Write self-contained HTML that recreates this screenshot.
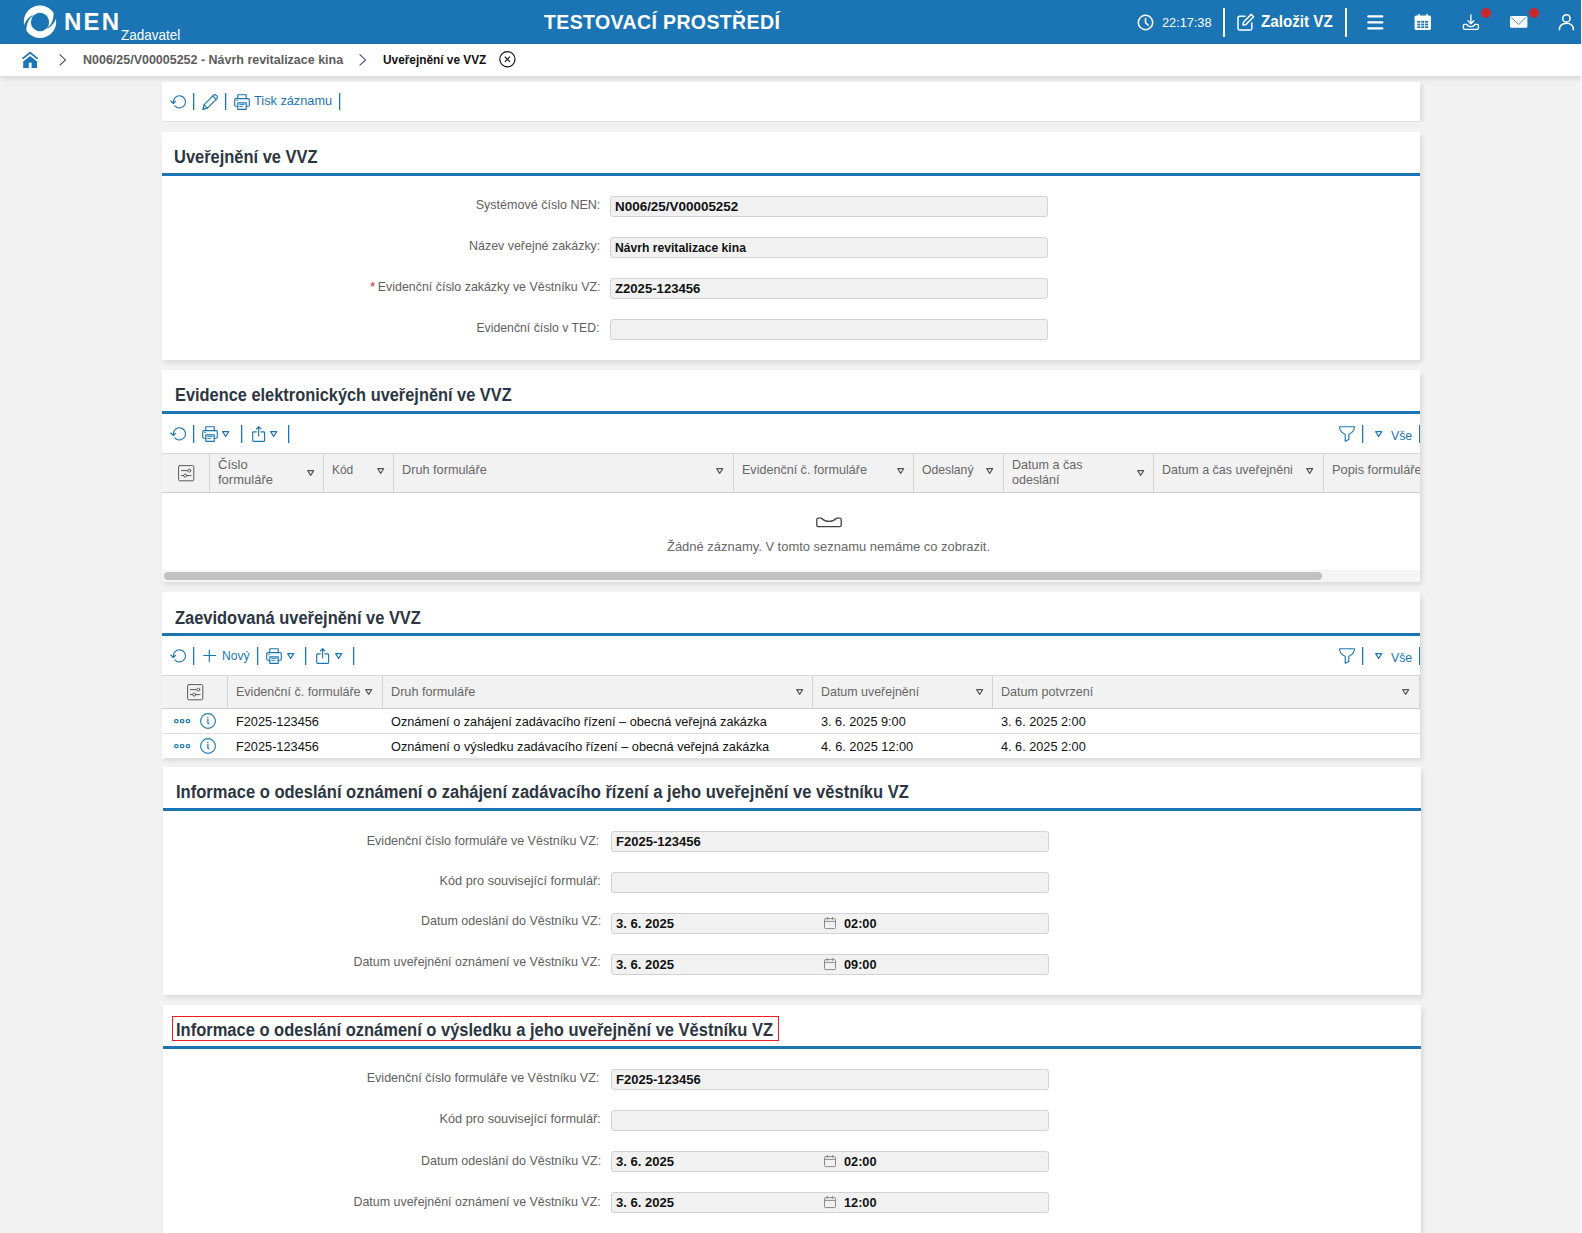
<!DOCTYPE html>
<html lang="cs">
<head>
<meta charset="utf-8">
<title>NEN - Uveřejnění ve VVZ</title>
<style>
*{box-sizing:border-box;margin:0;padding:0}
html,body{width:1582px;height:1233px;overflow:hidden;background:#fff}
body{font-family:"Liberation Sans",sans-serif;font-size:13px;color:#666;position:relative}
#app{position:absolute;left:0;top:0;width:1581px;height:1233px;background:#f2f2f2;overflow:hidden}
.abs{position:absolute}
svg{display:block;overflow:visible}
/* header */
#hdr{position:absolute;left:0;top:0;width:1581px;height:44px;background:#1b75b4;color:#fff}
#bc{position:absolute;left:0;top:44px;width:1581px;height:32px;background:#fff;box-shadow:0 2px 6px rgba(0,0,0,.14)}
.t{position:absolute;white-space:nowrap;line-height:1;transform-origin:0 0}
.r{transform-origin:100% 0}
/* panels */
.panel{position:absolute;background:#fff;box-shadow:2px 2.5px 5px rgba(0,0,0,.11)}
.ttl{position:absolute;left:12px;font-weight:bold;font-size:18px;color:#2c3642;white-space:nowrap;line-height:1;transform-origin:0 0}
.bline{position:absolute;left:0;right:0;height:3px;background:#1b75b4}
.lbl{position:absolute;white-space:nowrap;line-height:1;font-size:13px;color:#606060;transform-origin:100% 0}
.inp{position:absolute;left:448px;width:438px;height:21px;background:#f1f1f1;border:1px solid #d2d2d2;border-radius:3px}
.val{position:absolute;left:4.4px;top:3px;white-space:nowrap;line-height:1;font-size:13px;font-weight:bold;color:#111;transform-origin:0 0}
.sep{position:absolute;width:2px;background:linear-gradient(to right,#1b75b4 0,#1b75b4 1px,rgba(27,117,180,.28) 1px)}
.blue{color:#1b75b4}
.th{position:absolute;background:#f2f2f2;border-top:1px solid #d6d6d6;border-bottom:1px solid #cfcfcf}
.cs{position:absolute;width:1px;background:#d4d4d4}
.ht{position:absolute;white-space:nowrap;line-height:14.6px;font-size:13px;color:#666;transform-origin:0 0}
.ct{position:absolute;white-space:nowrap;line-height:1;font-size:13px;color:#111;transform-origin:0 0}
</style>
</head>
<body>
<div id="app">

<div id="hdr">
  <svg class="abs" style="left:0;top:0" width="80" height="44" viewBox="0 0 80 44">
    <circle cx="40" cy="21.8" r="16.2" fill="#fff"/>
    <circle cx="40" cy="22" r="9.2" fill="#1b75b4"/>
    <g id="sw" fill="#1b75b4">
      <path d="M23.4 27.4 C24.6 22.3 27.6 17.8 32.3 15.3 L32.8 16 C29.1 18.6 26.5 22.8 26.3 31.4 Z"/>
      <path d="M23.4 27.4 C24.6 22.3 27.6 17.8 32.3 15.3 L32.8 16 C29.1 18.6 26.5 22.8 26.3 31.4 Z" transform="rotate(180 40 21.9)"/>
    </g>
  </svg>
  <div class="t" style="left:64px;top:10px;font-size:24px;font-weight:bold;letter-spacing:2.2px">NEN</div>
  <div class="t" style="left:120.5px;top:27.5px;font-size:14px;transform:scaleX(0.9628)">Zadavatel</div>
  <div class="t" style="left:544px;top:13px;font-size:19.5px;font-weight:bold;letter-spacing:0.38px">TESTOVACÍ PROSTŘEDÍ</div>
  <!-- clock -->
  <svg class="abs" style="left:1137px;top:14px" width="17" height="17" viewBox="0 0 17 17" fill="none" stroke="#fff" stroke-width="1.5" stroke-linecap="round" stroke-linejoin="round">
    <circle cx="8.5" cy="8.5" r="7.2"/><path d="M8.5 4.4V8.6L11.3 11.2"/>
  </svg>
  <div class="t" style="left:1161.5px;top:16px;font-size:13px;transform:scaleX(0.9781)">22:17:38</div>
  <div class="abs" style="left:1223px;top:8px;width:2px;height:29px;background:#fff"></div>
  <!-- edit -->
  <svg class="abs" style="left:1237px;top:13px" width="18" height="18" viewBox="0 0 18 18" fill="none" stroke="#fff" stroke-width="1.5" stroke-linecap="round" stroke-linejoin="round">
    <path d="M8 3.2H2.6Q1 3.2 1 4.8V15.4Q1 17 2.6 17H13.2Q14.8 17 14.8 15.4V10"/>
    <path d="M14.2 1.4L16.6 3.8L9 11.4L6 12L6.6 9Z"/>
  </svg>
  <div class="t" style="left:1261px;top:13.5px;font-size:16px;font-weight:bold;transform:scaleX(0.9489)">Založit VZ</div>
  <div class="abs" style="left:1345px;top:8px;width:2px;height:29px;background:#fff"></div>
  <!-- hamburger -->
  <svg class="abs" style="left:1367px;top:14px" width="17" height="17" viewBox="0 0 17 17" fill="#fff">
    <rect x="0.2" y="1.2" width="16.2" height="2.3" rx="1"/><rect x="0.2" y="7.2" width="16.2" height="2.3" rx="1"/><rect x="0.2" y="13.2" width="16.2" height="2.3" rx="1"/>
  </svg>
  <!-- calendar -->
  <svg class="abs" style="left:1414px;top:13px" width="18" height="18" viewBox="0 0 18 18">
    <rect x="0.6" y="2.6" width="16.4" height="14.4" rx="1.6" fill="#fff"/>
    <rect x="4" y="0.8" width="1.6" height="3.6" rx=".8" fill="#fff"/><rect x="12" y="0.8" width="1.6" height="3.6" rx=".8" fill="#fff"/>
    <g fill="#1b75b4"><rect x="3.3" y="7.9" width="3" height="1.8"/><rect x="7.2" y="7.9" width="3" height="1.8"/><rect x="11.1" y="7.9" width="3" height="1.8"/><rect x="3.3" y="10.6" width="3" height="1.8"/><rect x="7.2" y="10.6" width="3" height="1.8"/><rect x="11.1" y="10.6" width="3" height="1.8"/><rect x="3.3" y="13.3" width="3" height="1.8"/><rect x="7.2" y="13.3" width="3" height="1.8"/><rect x="11.1" y="13.3" width="3" height="1.8"/></g>
  </svg>
  <!-- download -->
  <svg class="abs" style="left:1462px;top:13px" width="18" height="18" viewBox="0 0 18 18" fill="none" stroke="#fff" stroke-width="1.35" stroke-linecap="round" stroke-linejoin="round">
    <path d="M8.9 1.8V10.6M6 7.8L8.9 10.8L11.8 7.8"/>
    <path d="M5 11.4H2.6Q1.4 11.4 1.4 12.6V15Q1.4 16.4 2.8 16.4H15Q16.4 16.4 16.4 15V12.6Q16.4 11.4 15.2 11.4H12.8Q12.4 13.6 8.9 13.6Q5.4 13.6 5 11.4Z"/>
  </svg>
  <div class="abs" style="left:1481px;top:8px;width:10px;height:10px;border-radius:5px;background:#c9272d"></div>
  <!-- mail -->
  <svg class="abs" style="left:1510px;top:16px" width="18" height="12" viewBox="0 0 18 12">
    <rect x="0" y="0" width="17.4" height="11.8" rx="1.4" fill="#fff"/>
    <path d="M1.2 1.2L8.7 8.6L16.2 1.2" fill="none" stroke="#1b75b4" stroke-width="0.8"/>
  </svg>
  <div class="abs" style="left:1529px;top:8px;width:10px;height:10px;border-radius:5px;background:#c9272d"></div>
  <!-- user -->
  <svg class="abs" style="left:1558px;top:13px" width="17" height="18" viewBox="0 0 17 18" fill="none" stroke="#fff" stroke-width="1.5" stroke-linecap="round">
    <circle cx="8.4" cy="5.4" r="3.7"/><path d="M1.4 16.8C1.4 12.6 4.4 10.2 8.4 10.2C12.4 10.2 15.4 12.6 15.4 16.8"/>
  </svg>
</div>

<div id="bc">
  <svg class="abs" style="left:22px;top:7px" width="17" height="18" viewBox="0 0 17 18">
    <path d="M1 7.3L8.1 1.5L15.2 7.3" fill="none" stroke="#1b75b4" stroke-width="1.7" stroke-linecap="round" stroke-linejoin="miter"/>
    <path d="M8.1 5L1.2 10.5V16.4Q1.2 17 1.8 17H6.8V11.7H9.6V17H14.4Q15 17 15 16.4V10.5Z" fill="#1b75b4"/>
  </svg>
  <svg class="abs" style="left:59px;top:10px" width="8" height="12" viewBox="0 0 8 12" fill="none" stroke="#3d4a66" stroke-width="1.05"><path d="M0.6 0.4L6.5 5.9L0.6 11.4"/></svg>
  <div class="t" style="left:82.5px;top:10px;font-size:12px;font-weight:bold;color:#5c5c5c;transform:scaleX(1.0397)">N006/25/V00005252 - Návrh revitalizace kina</div>
  <svg class="abs" style="left:359.2px;top:10.2px" width="8" height="12" viewBox="0 0 8 12" fill="none" stroke="#3d4a66" stroke-width="1.05"><path d="M0.6 0.4L6.5 5.9L0.6 11.4"/></svg>
  <div class="t" style="left:383px;top:10px;font-size:12px;font-weight:bold;color:#111;transform:scaleX(0.9865)">Uveřejnění ve VVZ</div>
  <svg class="abs" style="left:499px;top:7.2px" width="17" height="17" viewBox="0 0 17 17" fill="none" stroke="#111" stroke-width="1.2"><circle cx="8.4" cy="8.3" r="7.6"/><path d="M5.8 5.7L11 10.9M11 5.7L5.8 10.9" stroke-width="1.1"/></svg>
</div>

<svg width="0" height="0" style="position:absolute">
  <defs>
    <g id="i-refresh" fill="none" stroke="#1b75b4" stroke-width="1.15" stroke-linecap="round" stroke-linejoin="round">
      <path d="M4.83 11.82A6.1 6.1 0 1 0 3.5 9.1"/><path d="M0.8 7L3.4 9.5L5.5 7.3"/>
    </g>
    <g id="i-print" fill="none" stroke="#1b75b4" stroke-width="1.15" stroke-linejoin="round" stroke-linecap="round">
      <path d="M3.8 4.6V0.7H12.2V4.6"/>
      <path d="M3.8 12.2H1.8Q0.7 12.2 0.7 11.1V5.7Q0.7 4.6 1.8 4.6H14.2Q15.3 4.6 15.3 5.7V11.1Q15.3 12.2 14.2 12.2H12.2"/>
      <path d="M3.8 8.8H12.2V15.3H3.8Z"/>
      <path d="M5.7 10.6H10.3M5.7 12.6H8.6M2.6 6.5H3.3" stroke-width="0.9"/>
    </g>
    <g id="i-pencil" fill="none" stroke="#1b75b4" stroke-width="1.15" stroke-linejoin="round" stroke-linecap="round">
      <path d="M0.8 15.4L2 10.8L11.6 1.2Q12.8 0.2 14 1.2L15 2.2Q16 3.4 15 4.6L5.4 14.2Z"/>
      <path d="M2 10.8L5.4 14.2M10.9 2L14.2 5.3"/>
      <path d="M0.8 15.4L1.5 12.8L3.4 14.7Z" fill="#1b75b4" stroke="none"/>
    </g>
    <g id="i-export" fill="none" stroke="#1b75b4" stroke-width="1.15" stroke-linejoin="round" stroke-linecap="round">
      <path d="M4.4 5.8H1.6Q0.7 5.8 0.7 6.7V14.4Q0.7 15.3 1.6 15.3H11.7Q12.6 15.3 12.6 14.4V6.7Q12.6 5.8 11.7 5.8H8.9"/>
      <path d="M6.65 10V0.8M4.4 3L6.65 0.7L8.9 3"/>
    </g>
    <g id="i-tri" fill="none" stroke="#1b75b4" stroke-width="1.2" stroke-linejoin="round">
      <path d="M0.65 0.65H6.7L3.68 5.5Z"/>
    </g>
    <g id="i-trig" fill="none" stroke="#555" stroke-width="1.1" stroke-linejoin="round">
      <path d="M0.65 0.65H6.7L3.68 5.35Z"/>
    </g>
    <g id="i-funnel" fill="none" stroke="#1b75b4" stroke-width="1.15" stroke-linejoin="round" stroke-linecap="round">
      <path d="M1.2 0.7H14.8Q15.6 0.7 15.5 1.5Q14.6 6.4 9.8 8.2V13.4L6.2 15.3V8.2Q1.4 6.4 0.5 1.5Q0.4 0.7 1.2 0.7Z"/>
    </g>
    <g id="i-plus" fill="none" stroke="#1b75b4" stroke-width="1.15" stroke-linecap="round">
      <path d="M5.3 0V11.6M-0.3 5.5H11.6"/>
    </g>
    <g id="i-sett" fill="none" stroke="#5a5a5a" stroke-width="1" stroke-linecap="round">
      <rect x="0.6" y="0.6" width="15.2" height="15.2" rx="1.2"/>
      <path d="M3.4 5.6H9.6M3.4 10.6H5.6M8.8 10.6H13"/>
      <circle cx="11.3" cy="5.6" r="1.5"/><circle cx="7.2" cy="10.6" r="1.5"/>
    </g>
    <g id="i-dots" fill="none" stroke="#1b75b4" stroke-width="1.2">
      <rect x="0.6" y="0.6" width="3.5" height="3.1" rx="1.5"/><rect x="6.4" y="0.6" width="3.5" height="3.1" rx="1.5"/><rect x="12.2" y="0.6" width="3.5" height="3.1" rx="1.5"/>
    </g>
    <g id="i-info" fill="none" stroke="#1b75b4" stroke-width="1.1" stroke-linecap="round">
      <circle cx="8" cy="8" r="7.4"/>
      <path d="M7.9 6.2V10.2L8.9 10.8" stroke-width="1.2"/><circle cx="7.8" cy="4.4" r="0.7" fill="#1b75b4" stroke="none"/>
    </g>
    <g id="i-cal" fill="none" stroke="#8a8a8a" stroke-width="1" stroke-linecap="round">
      <rect x="0.5" y="1.6" width="11" height="10" rx="1"/><path d="M0.6 4.4H11.4M3.4 0.4V2.4M8.6 0.4V2.4"/>
    </g>
  </defs>
</svg>
<div class="panel" style="left:162px;top:82px;width:1258px;height:39px;clip-path:inset(-2px -10px -1px -2px)">
  <svg class="abs" style="left:8px;top:12px" width="17" height="16"><use href="#i-refresh"/></svg>
  <div class="sep" style="left:31px;top:11px;height:17px"></div>
  <svg class="abs" style="left:40px;top:11.5px" width="17" height="17"><use href="#i-pencil"/></svg>
  <div class="sep" style="left:63px;top:11px;height:17px"></div>
  <svg class="abs" style="left:72px;top:12px" width="17" height="17"><use href="#i-print"/></svg>
  <div class="t blue" style="left:92px;top:12px;font-size:13px;transform:scaleX(0.9797)">Tisk záznamu</div>
  <div class="sep" style="left:177px;top:11px;height:17px"></div>
</div>

<div class="panel" style="left:162px;top:132px;width:1258px;height:228px">
  <div class="ttl" style="top:16px;left:12.2px;transform:scaleX(0.9142)">Uveřejnění ve VVZ</div>
  <div class="bline" style="top:41px"></div>
  <div class="lbl" style="right:820px;top:66px;transform:scaleX(0.9634)">Systémové číslo NEN:</div>
  <div class="inp" style="top:64px"><div class="val" style="transform:scaleX(1.0337)">N006/25/V00005252</div></div>
  <div class="lbl" style="right:820px;top:107px;transform:scaleX(0.9557)">Název veřejné zakázky:</div>
  <div class="inp" style="top:105px"><div class="val" style="transform:scaleX(0.9336)">Návrh revitalizace kina</div></div>
  <div class="lbl" style="right:820px;top:148px;transform:scaleX(0.9538)"><span style="color:#c9272d;margin-right:3px">*</span>Evidenční číslo zakázky ve Věstníku VZ:</div>
  <div class="inp" style="top:146px"><div class="val" style="transform:scaleX(1.0097)">Z2025-123456</div></div>
  <div class="lbl" style="right:820px;top:189px;transform:scaleX(0.9430)">Evidenční číslo v TED:</div>
  <div class="inp" style="top:187px"></div>
</div>

<div class="panel" style="left:162px;top:370px;width:1258px;height:212px;overflow:hidden">
  <div class="ttl" style="top:16px;left:12.6px;transform:scaleX(0.9096)">Evidence elektronických uveřejnění ve VVZ</div>
  <div class="bline" style="top:41px"></div>
  <svg class="abs" style="left:8px;top:56px" width="17" height="16"><use href="#i-refresh"/></svg>
  <div class="sep" style="left:31px;top:55px;height:18px"></div>
  <svg class="abs" style="left:40px;top:56px" width="17" height="17"><use href="#i-print"/></svg>
  <svg class="abs" style="left:60.3px;top:60.5px" width="8" height="7"><use href="#i-tri"/></svg>
  <div class="sep" style="left:79px;top:55px;height:18px"></div>
  <svg class="abs" style="left:89.6px;top:56px" width="14" height="17"><use href="#i-export"/></svg>
  <svg class="abs" style="left:108px;top:60.5px" width="8" height="7"><use href="#i-tri"/></svg>
  <div class="sep" style="left:126px;top:55px;height:18px"></div>
  <svg class="abs" style="left:1177px;top:56px" width="17" height="17"><use href="#i-funnel"/></svg>
  <div class="sep" style="left:1200px;top:55px;height:18px"></div>
  <svg class="abs" style="left:1213.3px;top:60.5px" width="8" height="7"><use href="#i-tri"/></svg>
  <div class="t blue" style="left:1228.5px;top:59px;font-size:13px;transform:scaleX(0.9462)">Vše</div>
  <div class="sep" style="left:1256.8px;top:55px;height:18px"></div>
  <!-- header -->
  <div class="th" style="left:0;top:83px;width:1258px;height:40px"></div>
  <svg class="abs" style="left:16px;top:95px" width="17" height="17"><use href="#i-sett"/></svg>
  <div class="cs" style="left:47px;top:84px;height:38px"></div>
  <div class="ht" style="left:56px;top:88px;transform:scaleX(1.0014)">Číslo<br>formuláře</div>
  <svg class="abs" style="left:145px;top:100px" width="8" height="7"><use href="#i-trig"/></svg>
  <div class="cs" style="left:161px;top:84px;height:38px"></div>
  <div class="ht" style="left:170px;top:92.5px;transform:scaleX(0.9161)">Kód</div>
  <svg class="abs" style="left:214.5px;top:97.5px" width="8" height="7"><use href="#i-trig"/></svg>
  <div class="cs" style="left:231px;top:84px;height:38px"></div>
  <div class="ht" style="left:240px;top:92.5px;transform:scaleX(0.9769)">Druh formuláře</div>
  <svg class="abs" style="left:554.3px;top:97.5px" width="8" height="7"><use href="#i-trig"/></svg>
  <div class="cs" style="left:571px;top:84px;height:38px"></div>
  <div class="ht" style="left:580px;top:92.5px;transform:scaleX(0.9656)">Evidenční č. formuláře</div>
  <svg class="abs" style="left:734.5px;top:97.5px" width="8" height="7"><use href="#i-trig"/></svg>
  <div class="cs" style="left:751px;top:84px;height:38px"></div>
  <div class="ht" style="left:760px;top:92.5px;transform:scaleX(0.9377)">Odeslaný</div>
  <svg class="abs" style="left:824.4px;top:97.5px" width="8" height="7"><use href="#i-trig"/></svg>
  <div class="cs" style="left:841px;top:84px;height:38px"></div>
  <div class="ht" style="left:850px;top:88px;transform:scaleX(0.9660)">Datum a čas<br>odeslání</div>
  <svg class="abs" style="left:975px;top:100px" width="8" height="7"><use href="#i-trig"/></svg>
  <div class="cs" style="left:991px;top:84px;height:38px"></div>
  <div class="ht" style="left:1000px;top:92.5px;transform:scaleX(0.9584)">Datum a čas uveřejněni</div>
  <svg class="abs" style="left:1144.4px;top:97.5px" width="8" height="7"><use href="#i-trig"/></svg>
  <div class="cs" style="left:1161px;top:84px;height:38px"></div>
  <div class="ht" style="left:1170px;top:92.5px;transform:scaleX(0.9852)">Popis formuláře</div>
  <!-- empty -->
  <svg class="abs" style="left:654px;top:147px" width="26" height="11" viewBox="0 0 26 11" fill="none" stroke="#444" stroke-width="1.3" stroke-linejoin="round"><path d="M2.2 1.2H5.4Q8.6 4.4 13 4.4Q17.4 4.400 20.600 1.2H23.8Q25.2 1.2 25.2 2.600V8.200Q25.2 9.600 23.8 9.600H2.2Q0.8 9.600 0.8 8.200V2.600Q0.8 1.2 2.2 1.2Z"/></svg>
  <div class="t" style="left:505px;top:170px;font-size:13px;color:#666;transform:scaleX(0.9963)">Žádné záznamy. V tomto seznamu nemáme co zobrazit.</div>
  <!-- scrollbar -->
  <div class="abs" style="left:0;top:200px;width:1258px;height:12px;background:#f5f5f5"></div>
  <div class="abs" style="left:2px;top:202px;width:1158px;height:8px;border-radius:4px;background:#c1c1c1"></div>
</div>

<div class="panel" style="left:162px;top:592px;width:1258px;height:166px;overflow:hidden">
  <div class="ttl" style="top:16.5px;left:12.6px;transform:scaleX(0.9137)">Zaevidovaná uveřejnění ve VVZ</div>
  <div class="bline" style="top:41px"></div>
  <svg class="abs" style="left:8px;top:56px" width="17" height="16"><use href="#i-refresh"/></svg>
  <div class="sep" style="left:31px;top:55px;height:18px"></div>
  <svg class="abs" style="left:42.2px;top:58px" width="12" height="12"><use href="#i-plus"/></svg>
  <div class="t blue" style="left:60.3px;top:57.2px;font-size:13px;transform:scaleX(0.9283)">Nový</div>
  <div class="sep" style="left:95px;top:55px;height:18px"></div>
  <svg class="abs" style="left:104.3px;top:56px" width="17" height="17"><use href="#i-print"/></svg>
  <svg class="abs" style="left:125px;top:60.5px" width="8" height="7"><use href="#i-tri"/></svg>
  <div class="sep" style="left:143px;top:55px;height:18px"></div>
  <svg class="abs" style="left:154px;top:56px" width="14" height="17"><use href="#i-export"/></svg>
  <svg class="abs" style="left:173px;top:60.5px" width="8" height="7"><use href="#i-tri"/></svg>
  <div class="sep" style="left:191px;top:55px;height:18px"></div>
  <svg class="abs" style="left:1177px;top:56px" width="17" height="17"><use href="#i-funnel"/></svg>
  <div class="sep" style="left:1200px;top:55px;height:18px"></div>
  <svg class="abs" style="left:1213.3px;top:60.5px" width="8" height="7"><use href="#i-tri"/></svg>
  <div class="t blue" style="left:1228.5px;top:59px;font-size:13px;transform:scaleX(0.9462)">Vše</div>
  <div class="sep" style="left:1256.8px;top:55px;height:18px"></div>
  <!-- header -->
  <div class="th" style="left:0;top:83px;width:1258px;height:34px"></div>
  <svg class="abs" style="left:25px;top:92px" width="17" height="17"><use href="#i-sett"/></svg>
  <div class="cs" style="left:65px;top:84px;height:32px"></div>
  <div class="ht" style="left:74px;top:93px;transform:scaleX(0.9633)">Evidenční č. formuláře</div>
  <svg class="abs" style="left:203.3px;top:97px" width="8" height="7"><use href="#i-trig"/></svg>
  <div class="cs" style="left:220px;top:84px;height:32px"></div>
  <div class="ht" style="left:229px;top:93px;transform:scaleX(0.9734)">Druh formuláře</div>
  <svg class="abs" style="left:633.5px;top:97px" width="8" height="7"><use href="#i-trig"/></svg>
  <div class="cs" style="left:650px;top:84px;height:32px"></div>
  <div class="ht" style="left:659px;top:93px;transform:scaleX(0.9559)">Datum uveřejnění</div>
  <svg class="abs" style="left:813.8px;top:97px" width="8" height="7"><use href="#i-trig"/></svg>
  <div class="cs" style="left:830px;top:84px;height:32px"></div>
  <div class="ht" style="left:839px;top:93px;transform:scaleX(0.9667)">Datum potvrzení</div>
  <svg class="abs" style="left:1240.2px;top:97px" width="8" height="7"><use href="#i-trig"/></svg>
  <div class="cs" style="left:1257px;top:84px;height:32px"></div>
  <!-- rows -->
  <div class="abs" style="left:0;top:141px;width:1258px;height:1px;background:#dcdcdc"></div>
  <svg class="abs" style="left:11.6px;top:126.7px" width="17" height="5"><use href="#i-dots"/></svg>
  <svg class="abs" style="left:38px;top:121px" width="16" height="16"><use href="#i-info"/></svg>
  <div class="ct" style="left:74px;top:122.5px;transform:scaleX(0.9802)">F2025-123456</div>
  <div class="ct" style="left:229px;top:122.5px;transform:scaleX(0.9772)">Oznámení o zahájení zadávacího řízení – obecná veřejná zakázka</div>
  <div class="ct" style="left:659px;top:122.5px;transform:scaleX(0.9764)">3. 6. 2025 9:00</div>
  <div class="ct" style="left:839px;top:122.5px;transform:scaleX(0.9764)">3. 6. 2025 2:00</div>
  <svg class="abs" style="left:11.6px;top:151.5px" width="17" height="5"><use href="#i-dots"/></svg>
  <svg class="abs" style="left:38px;top:146px" width="16" height="16"><use href="#i-info"/></svg>
  <div class="ct" style="left:74px;top:147.5px;transform:scaleX(0.9802)">F2025-123456</div>
  <div class="ct" style="left:229px;top:147.5px;transform:scaleX(0.9801)">Oznámení o výsledku zadávacího řízení – obecná veřejná zakázka</div>
  <div class="ct" style="left:659px;top:147.5px;transform:scaleX(0.9810)">4. 6. 2025 12:00</div>
  <div class="ct" style="left:839px;top:147.5px;transform:scaleX(0.9764)">4. 6. 2025 2:00</div>
</div>

<div class="panel" style="left:163px;top:767px;width:1258px;height:228px">
  <div class="ttl" style="top:16px;left:12.5px;transform:scaleX(0.9193)">Informace o odeslání oznámení o zahájení zadávacího řízení a jeho uveřejnění ve věstníku VZ</div>
  <div class="bline" style="top:41px"></div>
  <div class="lbl" style="right:821.4px;top:66.5px;transform:scaleX(0.9638)">Evidenční číslo formuláře ve Věstníku VZ:</div>
  <div class="inp" style="top:64px"><div class="val" style="transform:scaleX(1.0026)">F2025-123456</div></div>
  <div class="lbl" style="right:820px;top:107px;transform:scaleX(0.9785)">Kód pro související formulář:</div>
  <div class="inp" style="top:105px"></div>
  <div class="lbl" style="right:820px;top:147px;transform:scaleX(0.9628)">Datum odeslání do Věstníku VZ:</div>
  <div class="inp" style="top:146px"><div class="val" style="transform:scaleX(1.0047)">3. 6. 2025</div><svg class="abs" style="left:212px;top:3px" width="12" height="12"><use href="#i-cal"/></svg><div class="val" style="left:232px;transform:scaleX(0.9774)">02:00</div></div>
  <div class="lbl" style="right:820px;top:187.7px;transform:scaleX(0.9556)">Datum uveřejnění oznámení ve Věstníku VZ:</div>
  <div class="inp" style="top:187px"><div class="val" style="transform:scaleX(1.0047)">3. 6. 2025</div><svg class="abs" style="left:212px;top:3px" width="12" height="12"><use href="#i-cal"/></svg><div class="val" style="left:232px;transform:scaleX(0.9774)">09:00</div></div>
</div>

<div class="panel" style="left:163px;top:1005px;width:1258px;height:240px">
  <div class="abs" style="left:9px;top:11px;width:607px;height:25px;border:1px solid #ec1c24"></div>
  <div class="ttl" style="top:16px;left:12.5px;transform:scaleX(0.9168)">Informace o odeslání oznámení o výsledku a jeho uveřejnění ve Věstníku VZ</div>
  <div class="bline" style="top:41px"></div>
  <div class="lbl" style="right:821.4px;top:66.3px;transform:scaleX(0.9638)">Evidenční číslo formuláře ve Věstníku VZ:</div>
  <div class="inp" style="top:64px"><div class="val" style="transform:scaleX(1.0026)">F2025-123456</div></div>
  <div class="lbl" style="right:820px;top:107.2px;transform:scaleX(0.9785)">Kód pro související formulář:</div>
  <div class="inp" style="top:105px"></div>
  <div class="lbl" style="right:820px;top:148.7px;transform:scaleX(0.9628)">Datum odeslání do Věstníku VZ:</div>
  <div class="inp" style="top:146px"><div class="val" style="transform:scaleX(1.0047)">3. 6. 2025</div><svg class="abs" style="left:212px;top:3px" width="12" height="12"><use href="#i-cal"/></svg><div class="val" style="left:232px;transform:scaleX(0.9774)">02:00</div></div>
  <div class="lbl" style="right:820px;top:189.6px;transform:scaleX(0.9556)">Datum uveřejnění oznámení ve Věstníku VZ:</div>
  <div class="inp" style="top:187px"><div class="val" style="transform:scaleX(1.0047)">3. 6. 2025</div><svg class="abs" style="left:212px;top:3px" width="12" height="12"><use href="#i-cal"/></svg><div class="val" style="left:232px;transform:scaleX(0.9774)">12:00</div></div>
</div>


</div>
</body>
</html>
